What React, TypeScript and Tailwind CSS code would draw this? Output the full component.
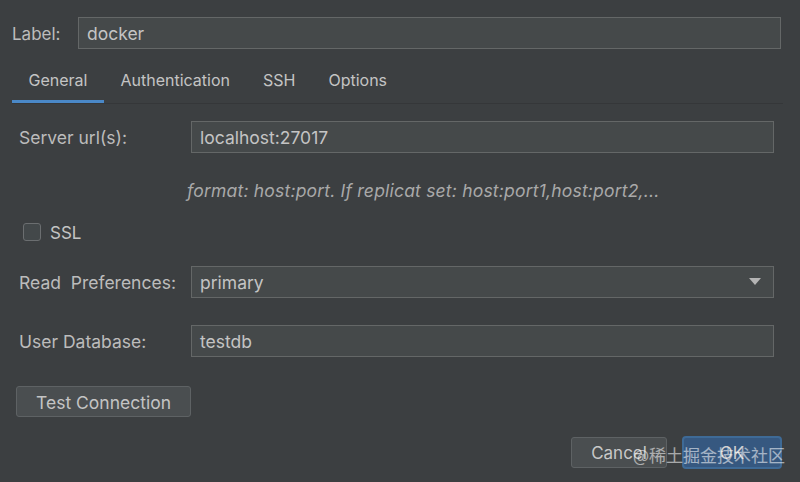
import { ReactNode } from 'react'

const TABS = ['General', 'Authentication', 'SSH', 'Options']

function Field({ children, className = '' }: { children: ReactNode; className?: string }) {
  return (
    <div
      className={`flex items-center h-[32px] flex-1 bg-[#45494a] border border-[#646767] px-[8px] pt-[3px] text-[17.5px] text-[#c4c4c4] ${className}`}
    >
      {children}
    </div>
  )
}

function Row({ label, children }: { label: string; children: ReactNode }) {
  return (
    <div className="flex items-center">
      <span className="w-[172px] shrink-0 pt-[3px] whitespace-pre text-[17.5px] text-[#bcbcbc]">{label}</span>
      {children}
    </div>
  )
}

export default function App() {
  return (
    <div
      className="relative w-[800px] h-[482px] bg-[#3c3f41] text-[#bbbbbb] overflow-hidden"
      style={{ fontFamily: 'Inter, "Noto Sans", sans-serif' }}
    >
      {/* ── Label ─────────────────────────── */}
      <div className="flex items-center pt-[17px] pl-[12px] pr-[19px]">
        <span className="w-[66px] shrink-0 pt-[3px] text-[17px] text-[#bcbcbc]">Label:</span>
        <Field>docker</Field>
      </div>

      {/* ── Tabs ──────────────────────────── */}
      <div className="flex mt-[8px] ml-[12px] mr-[17px] border-b border-[#353739]">
        {TABS.map((t, i) => (
          <div
            key={t}
            className={`px-[16.5px] pt-[13px] pb-[10px] border-b-[3px] leading-[20px] text-[16px] text-[#c4c4c4] ${
              i === 0 ? 'border-[#4a88c7]' : 'border-transparent'
            }`}
          >
            {t}
          </div>
        ))}
      </div>

      {/* ── General pane ──────────────────── */}
      <div className="flex flex-col pl-[19px] pr-[26px]">
        <div className="mt-[17px]">
          <Row label="Server url(s):">
            <Field>localhost:27017</Field>
          </Row>
        </div>

        <div className="mt-[28px] pl-[168px] leading-[20px] text-[17.5px] tracking-[0.2px] italic text-[#a9a9a9] whitespace-nowrap">
          format: host:port. If replicat set: host:port1,host:port2,...
        </div>

        <label className="mt-[20px] ml-[4px] flex items-center gap-[9px] leading-[20px] text-[17px] text-[#c4c4c4]">
          <span className="w-[18px] h-[18px] rounded-[3px] border border-[#6b6e70] bg-[#43484a]" />
          <span className="pt-[2px]">SSL</span>
        </label>

        <div className="mt-[23px]">
          <Row label="Read  Preferences:">
            <Field className="justify-between pr-[12px]">
              <span>primary</span>
              <svg width="12" height="8" viewBox="0 0 12 8" className="-mt-[3px]">
                <path d="M0 0 L12 0 L6 7 Z" fill="#b4b4b4" />
              </svg>
            </Field>
          </Row>
        </div>

        <div className="mt-[27px]">
          <Row label="User Database:">
            <Field>testdb</Field>
          </Row>
        </div>

        <button className="mt-[29px] -ml-[3px] w-[175px] h-[31px] pt-[3px] rounded-[3px] border border-[#5e6264] bg-[#4a4e50] text-[17.5px] text-[#c4c4c4]">
          Test Connection
        </button>
      </div>

      {/* ── Dialog buttons ────────────────── */}
      <div className="flex justify-end items-center gap-[15px] mt-[19px] pr-[18px]">
        <button className="w-[96px] h-[31px] pt-[3px] rounded-[3px] border border-[#5e6264] bg-[#4a4e50] text-[17px] text-[#c8c8c8]">
          Cancel
        </button>
        <button className="w-[100px] h-[33px] pt-[3px] rounded-[4px] border-[2px] border-[#3e6a96] bg-[#365880] text-[17px] text-[#d0d0d0]">
          OK
        </button>
      </div>

      {/* watermark */}
      <span
        className="absolute left-[633px] top-[443px] text-[17px] leading-[24px] text-white/55 whitespace-nowrap"
        style={{ fontFamily: '"Noto Sans CJK SC", sans-serif' }}
      >
        @稀土掘金技术社区
      </span>
    </div>
  )
}
